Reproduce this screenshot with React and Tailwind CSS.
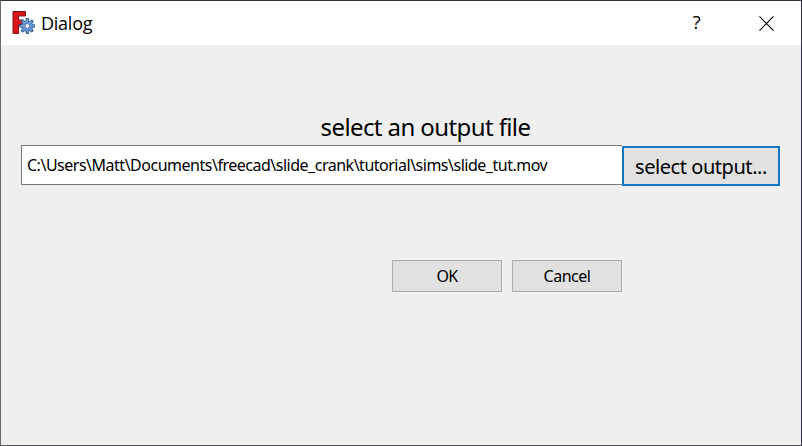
function FreeCadIcon() {
  const teeth = [0, 45, 90, 135, 180, 225, 270, 315];
  return (
    <svg className="block h-6 w-6" viewBox="0 0 24 24" aria-hidden="true">
      <path d="M2 .5H14.500v4.500H7.500V9h4.500v4.500H7.500v9H2Z" fill="#d9161f" stroke="#7d1418" />
      <g stroke="#2a5384" strokeWidth="1.400" strokeLinejoin="round" fill="#6a9bd3">
        {teeth.map((a) => (
          <path key={a} d="M14.900 11l.5-3.300h1.700l.5 3.300Z" transform={`rotate(${a} 16.25 15)`} />
        ))}
        <circle cx="16.250" cy="15" r="4.800" />
      </g>
      <g fill="#6a9bd3">
        {teeth.map((a) => (
          <path key={a} d="M15 11l.5-3.200h1.500l.5 3.200Z" transform={`rotate(${a} 16.25 15)`} />
        ))}
        <circle cx="16.250" cy="15" r="4.800" />
      </g>
      <circle cx="16.250" cy="15" r="2.300" fill="#fff" stroke="#3b6595" strokeWidth=".7" />
    </svg>
  );
}

function TitleBar() {
  return (
    <header className="flex h-11 shrink-0 items-center bg-white pl-[10px]">
      <FreeCadIcon />
      <h1 className="ml-[6px] flex-1 font-['Open_Sans',sans-serif] text-[18px] leading-6 tracking-[-0.25px]">Dialog</h1>
      <button className="flex h-11 w-[70px] items-center justify-center pb-px pl-px font-['Open_Sans',sans-serif] text-[19px]" aria-label="Help">?</button>
      <button className="flex h-11 w-[70px] items-center justify-center pl-px" aria-label="Close">
        <svg className="block h-[15px] w-[15px]" viewBox="0 0 16 16" stroke="#000" strokeWidth="1.200">
          <path d="M.5.5l15 15M15.500.5l-15 15" />
        </svg>
      </button>
    </header>
  );
}

export default function App() {
  return (
    <div className="flex h-[446px] w-[802px] flex-col border border-t-[#343139] border-r-[#343342] border-b-[#55545a] border-l-[#68686a] bg-[#efefef] font-['Noto_Sans','Liberation_Sans',sans-serif] text-black">
      <TitleBar />
      <main className="flex flex-col pt-[66px] pl-5">
        <div className="flex h-[34px] w-[809px] justify-center text-[24px] leading-[32px] whitespace-nowrap">
          <span className="tracking-[-0.6px]">select an output file</span>
        </div>
        <div className="flex items-start">
          <div className="flex h-10 w-[601px] items-center border border-r-0 border-[#7a7a7a] bg-white pl-[5px] text-[16px] whitespace-nowrap">
            <span className="tracking-[-0.49px]">C:\Users\Matt\Documents\freecad\slide_crank\tutorial\sims\slide_tut.mov</span>
          </div>
          <button className="mt-px flex h-10 w-[158px] items-center justify-center border-2 border-[#0f76c8] bg-[#e1e1e1] pt-[2px] text-[20px] whitespace-nowrap">
            <span className="tracking-[-0.45px]">select output...</span>
          </button>
        </div>
        <div className="mt-[74px] ml-[371px] flex gap-[10px] text-[16px]">
          <button className="flex h-8 w-[110px] items-center justify-center border border-[#adadad] bg-[#e1e1e1] tracking-[-0.6px]">OK</button>
          <button className="flex h-8 w-[110px] items-center justify-center border border-[#adadad] bg-[#e1e1e1] tracking-[-0.5px]">Cancel</button>
        </div>
      </main>
    </div>
  );
}
